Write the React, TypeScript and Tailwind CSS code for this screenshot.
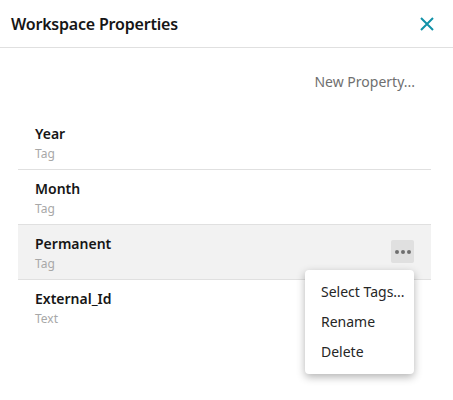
import React from 'react';

type Prop = { name: string; type: string; active?: boolean };

const props: Prop[] = [
  { name: 'Year', type: 'Tag' },
  { name: 'Month', type: 'Tag' },
  { name: 'Permanent', type: 'Tag', active: true },
  { name: 'External_Id', type: 'Text' },
];

export default function App() {
  return (
    <div className="relative w-[453px] h-[400px] bg-white text-[#161616] font-['Noto_Sans',sans-serif] overflow-hidden">
      <div className="flex h-[48px] items-center justify-between pl-[11px] pr-[19px] border-b border-[#e0e0e0]">
        <h1 className="text-[16px] font-semibold tracking-[-0.2px]">Workspace Properties</h1>
        <svg width="14" height="14" viewBox="0 0 14 14" className="text-[#1192a8]">
          <path d="M1 1L13 13M13 1L1 13" stroke="currentColor" strokeWidth="2" />
        </svg>
      </div>

      <div className="flex h-[67px] items-center justify-end pr-[38px]">
        <span className="text-[14px] text-[#6f6f6f]">New Property...</span>
      </div>

      <div className="ml-[18px] mr-[22px]">
        {props.map((p, i) => (
          <div
            key={p.name}
            className={`relative flex h-[55px] flex-col pt-[9px] px-[17px] ${i < props.length - 1 ? 'border-b border-[#e0e0e0]' : ''} ${p.active ? 'bg-[#f2f2f2]' : ''}`}
          >
            <div className="text-[14px] leading-[20px] font-semibold">{p.name}</div>
            <div className="mt-[2px] text-[12px] leading-[16px] text-[#a8a8a8]">{p.type}</div>
            {p.active && (
              <div className="absolute right-[17px] top-[15px] flex h-[23px] w-[23px] items-center justify-center gap-[2px] rounded-[2px] bg-[#e0e0e0]">
                <span className="h-[4px] w-[4px] rounded-full bg-[#6f6f6f]" />
                <span className="h-[4px] w-[4px] rounded-full bg-[#6f6f6f]" />
                <span className="h-[4px] w-[4px] rounded-full bg-[#6f6f6f]" />
              </div>
            )}
          </div>
        ))}
      </div>

      <div className="absolute left-[305px] top-[270px] w-[109px] rounded-[4px] bg-white pt-[6px] pb-[8px] shadow-[0_3px_8px_rgba(0,0,0,0.3)]">
        {['Select Tags...', 'Rename', 'Delete'].map((t) => (
          <div key={t} className="flex h-[30px] items-center whitespace-nowrap px-[16px] text-[14px] text-[#262626]">
            {t}
          </div>
        ))}
      </div>
    </div>
  );
}
